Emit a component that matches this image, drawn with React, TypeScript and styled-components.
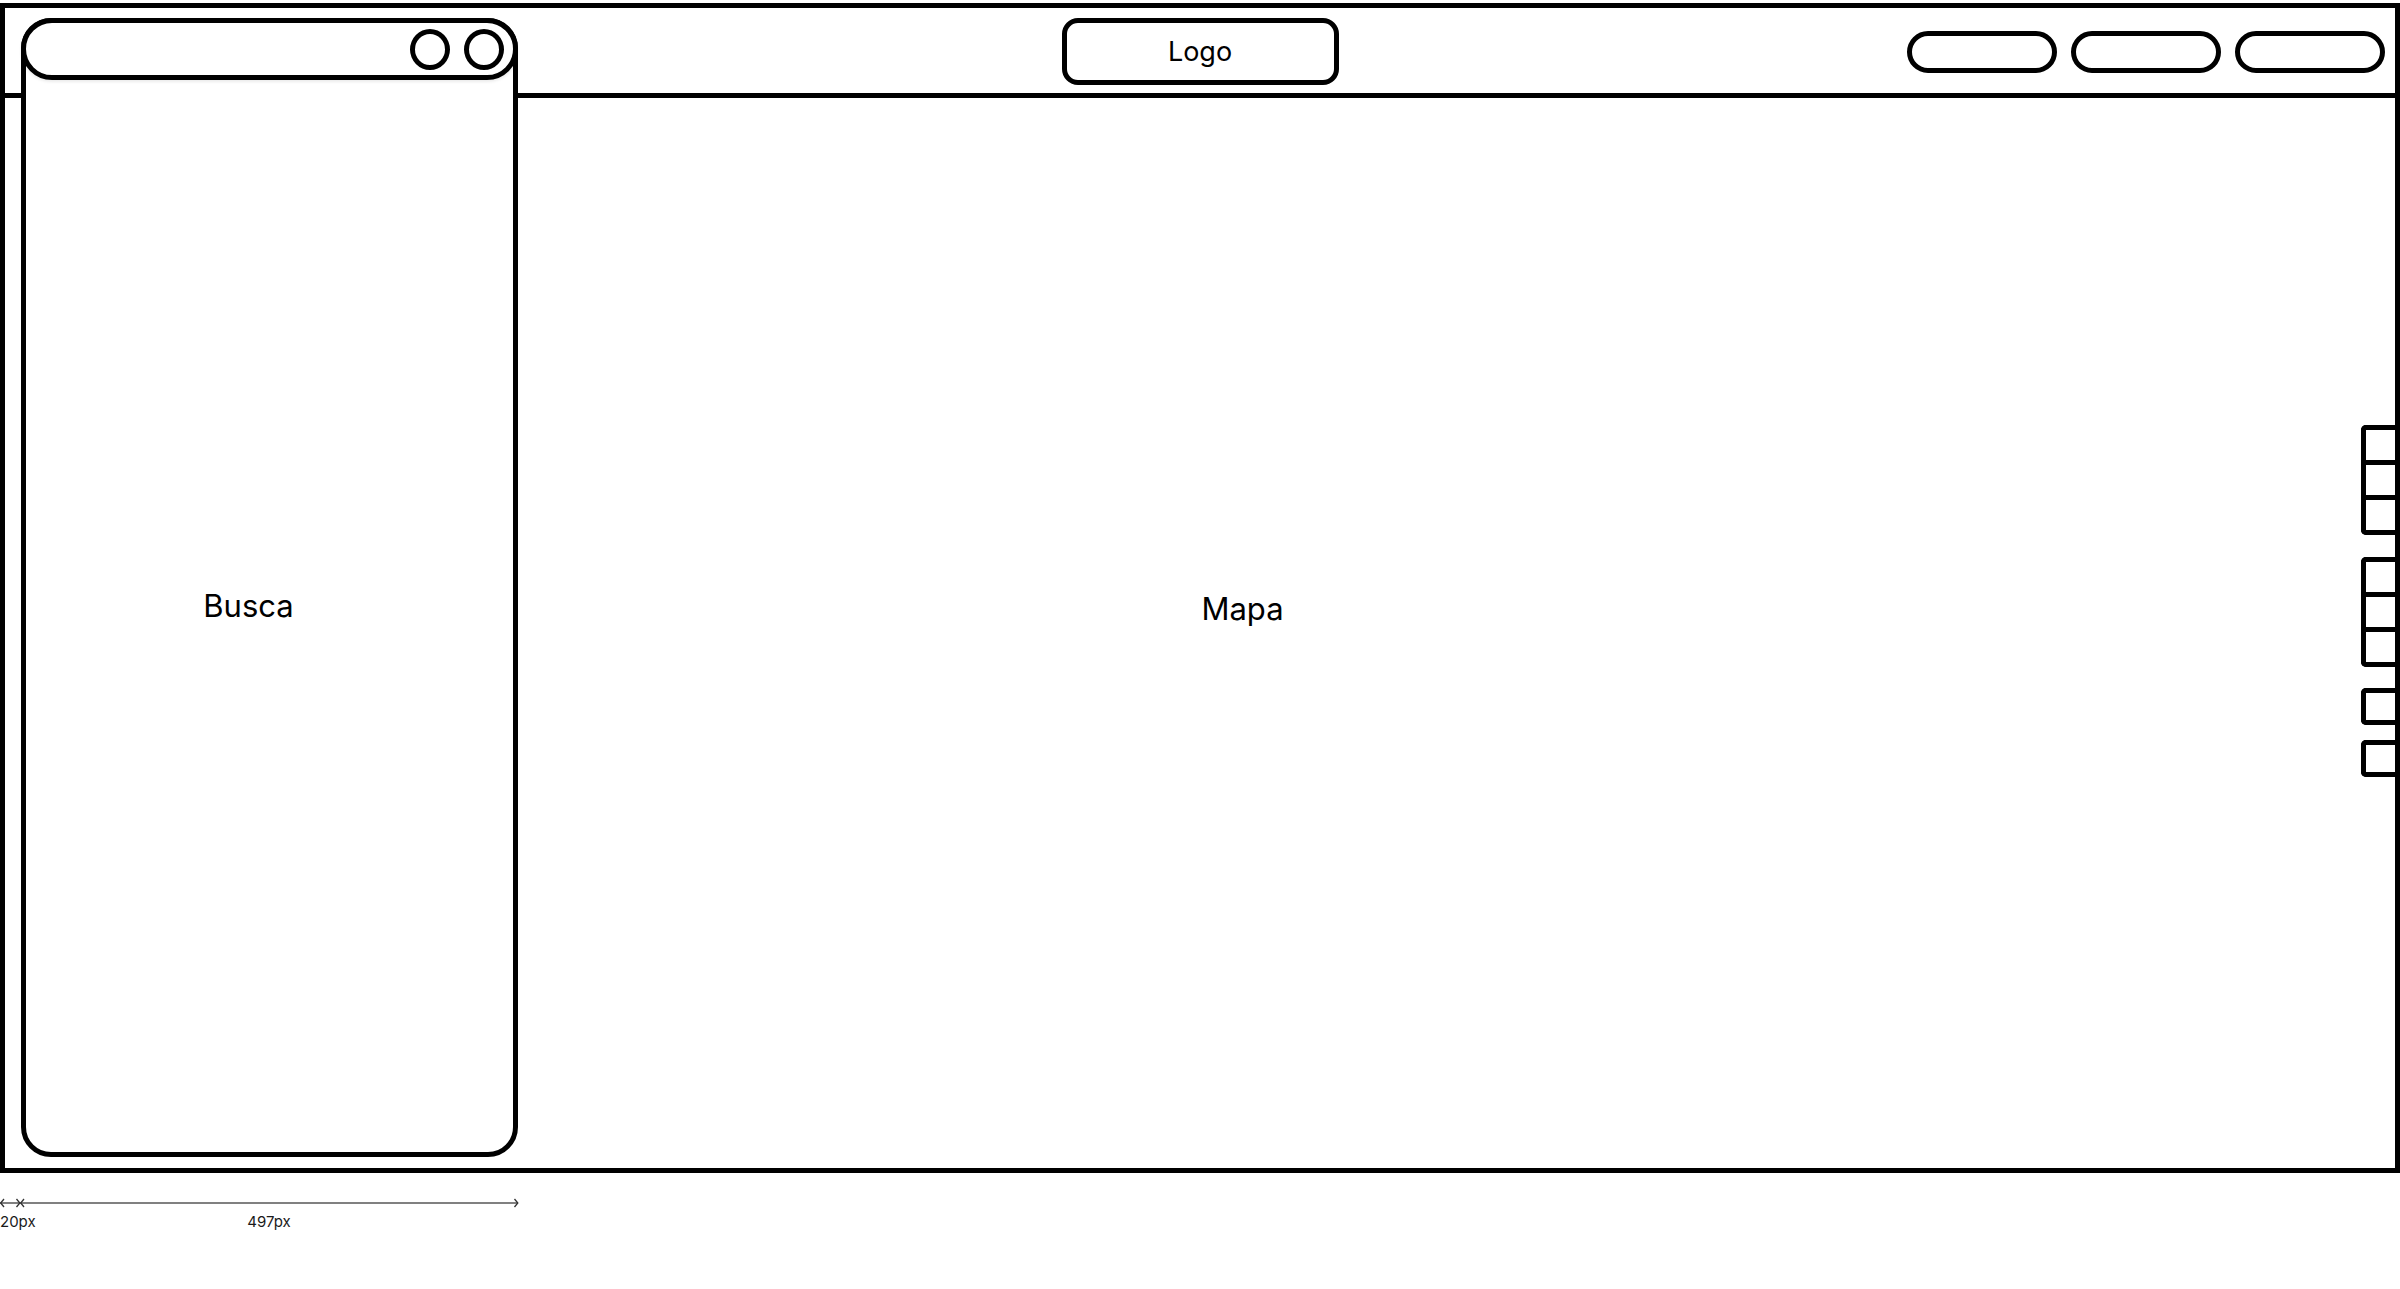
import React from "react";
import styled, { createGlobalStyle } from "styled-components";

const GlobalStyle = createGlobalStyle`
  html, body { margin: 0; padding: 0; background: #fff; }
  body { font-family: Inter, "Noto Sans", Arial, sans-serif; color: #000; }
`;

const Page = styled.div`
  width: 2400px;
  padding-top: 3px;
`;

const Frame = styled.div`
  position: relative;
  box-sizing: border-box;
  width: 2400px;
  height: 1170px;
  border: 5px solid #000;
  display: flex;
  flex-direction: column;
  background: #fff;
`;

const Header = styled.header`
  box-sizing: border-box;
  height: 90px;
  border-bottom: 5px solid #000;
  display: grid;
  grid-template-columns: 1fr auto 1fr;
  align-items: center;
  padding: 2px 10px 0;
`;

const LogoBox = styled.div`
  grid-column: 2;
  box-sizing: border-box;
  width: 277px;
  height: 67px;
  border: 5px solid #000;
  border-radius: 16px;
  display: flex;
  align-items: center;
  justify-content: center;
  font-size: 27px;
`;

const NavButtons = styled.nav`
  grid-column: 3;
  justify-self: end;
  display: flex;
  gap: 14px;
`;

const NavButton = styled.div`
  box-sizing: border-box;
  width: 150px;
  height: 42px;
  border: 5px solid #000;
  border-radius: 21px;
  background: #fff;
`;

const MapArea = styled.main`
  flex: 1;
  position: relative;
  display: flex;
  align-items: center;
  justify-content: center;
  padding: 0 0 49px 85px;
  font-size: 31px;
`;

const SearchPanel = styled.aside`
  position: absolute;
  left: 16px;
  top: 10px;
  z-index: 2;
  box-sizing: border-box;
  width: 497px;
  height: 1139px;
  border: 5px solid #000;
  border-radius: 30px;
  background: #fff;
  display: flex;
  flex-direction: column;
`;

const SearchBar = styled.div`
  margin: -5px -5px 0;
  box-sizing: border-box;
  height: 62px;
  border: 5px solid #000;
  border-radius: 31px;
  background: #fff;
  box-shadow: 0 2px 3px rgba(0, 0, 0, 0.08);
  display: flex;
  align-items: center;
  justify-content: flex-end;
  gap: 14px;
  padding-right: 9px;
`;

const RoundButton = styled.div`
  box-sizing: border-box;
  width: 40px;
  height: 41px;
  border: 5px solid #000;
  border-radius: 50%;
`;

const PanelBody = styled.div`
  flex: 1;
  display: flex;
  align-items: center;
  justify-content: center;
  padding: 0 42px 21px 0;
  font-size: 31px;
`;

const MapControls = styled.div`
  position: absolute;
  right: 0;
  top: 327px;
  display: flex;
  flex-direction: column;
`;

const ControlGroup = styled.div<{ $space: number }>`
  margin-top: ${(p) => p.$space}px;
  box-sizing: border-box;
  width: 34px;
  border: 5px solid #000;
  border-right: none;
  border-radius: 5px 0 0 5px;
  background: #fff;
  display: flex;
  flex-direction: column;
`;

const ControlButton = styled.div<{ $h: number }>`
  height: ${(p) => p.$h}px;
  & + & {
    border-top: 5px solid #000;
  }
`;

const Measure = styled.div`
  margin-top: 19px;
  width: 530px;
`;

const MeasureLabels = styled.div`
  display: grid;
  grid-template-columns: 20px 498px;
  margin-top: 1px;
  font-size: 15px;
  line-height: 18px;
  color: #1a1a1a;
`;

const MeasureLabel = styled.span<{ $center?: boolean }>`
  white-space: nowrap;
  text-align: ${(p) => (p.$center ? "center" : "left")};
`;

const groups = [
  { space: 0, count: 3, h: 30 },
  { space: 22, count: 3, h: 30 },
  { space: 21, count: 1, h: 27 },
  { space: 15, count: 1, h: 27 },
];

export default function App() {
  return (
    <Page>
      <GlobalStyle />
      <Frame>
        <Header>
          <LogoBox>Logo</LogoBox>
          <NavButtons>
            <NavButton />
            <NavButton />
            <NavButton />
          </NavButtons>
        </Header>
        <MapArea>
          Mapa
          <MapControls>
            {groups.map((g, i) => (
              <ControlGroup key={i} $space={g.space}>
                {Array.from({ length: g.count }).map((_, j) => (
                  <ControlButton key={j} $h={g.h} />
                ))}
              </ControlGroup>
            ))}
          </MapControls>
        </MapArea>
        <SearchPanel>
          <SearchBar>
            <RoundButton />
            <RoundButton />
          </SearchBar>
          <PanelBody>Busca</PanelBody>
        </SearchPanel>
      </Frame>
      <Measure>
        <svg width="530" height="10" viewBox="0 0 530 10">
          <line x1="0" y1="5" x2="518" y2="5" stroke="#808080" strokeWidth="2" />
          <g fill="none" stroke="#333" strokeWidth="1.3">
            <polyline points="4,1 0.7,5 4,9" />
            <polyline points="16.5,1 19.8,5 16.5,9" />
            <polyline points="24,1 20.7,5 24,9" />
            <polyline points="514.5,1 517.8,5 514.5,9" />
          </g>
        </svg>
        <MeasureLabels>
          <MeasureLabel>20px</MeasureLabel>
          <MeasureLabel $center>497px</MeasureLabel>
        </MeasureLabels>
      </Measure>
    </Page>
  );
}
